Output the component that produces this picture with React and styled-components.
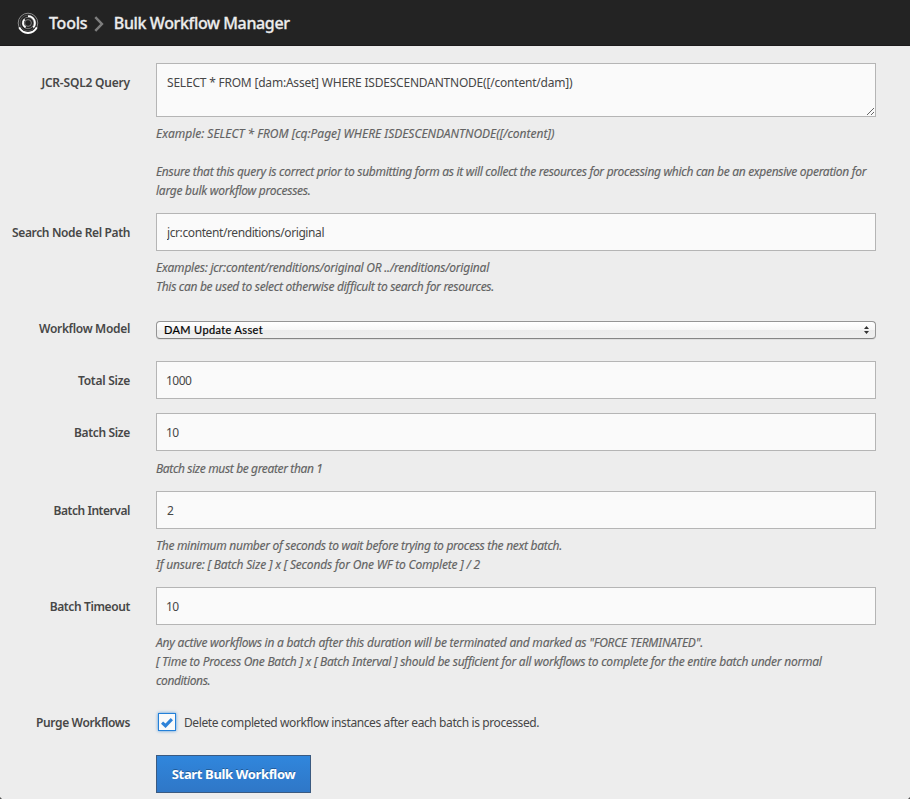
import React, { useState } from "react";
import styled, { createGlobalStyle } from "styled-components";

const GlobalStyle = createGlobalStyle`
  *, *::before, *::after { box-sizing: border-box; }
  body {
    margin: 0;
    background: #ededed;
    color: #474747;
    font: 12px/19px "Noto Sans", "Open Sans", sans-serif;
  }
  input, textarea, button { font: inherit; color: inherit; }
`;

const Page = styled.div`
  position: relative;
  height: 799px;
  overflow: hidden;
  background: #ededed;
`;

const Header = styled.header`
  display: flex;
  align-items: center;
  height: 46px;
  padding: 0 17px;
  background: #232323;
  border-bottom: 1px solid #1c1a1b;
`;

const Crumb = styled.span`
  color: #ececec;
  font-size: 16px;
  font-weight: 500;
  line-height: 24px;
  white-space: nowrap;
  letter-spacing: ${(p) => p.$ls}px;
  -webkit-text-stroke: 0.3px #ececec;
`;

const Logo = styled.svg`
  flex: none;
  width: 22px;
  height: 22px;
  margin-right: 10px;
`;

const Chevron = styled.svg`
  flex: none;
  width: 10px;
  height: 16px;
  margin: 2px 9.5px 0 7px;
`;

const Form = styled.form`
  display: flex;
  flex-direction: column;
  padding-top: 17px;
`;

const Row = styled.div`
  display: grid;
  grid-template-columns: 130px 720px;
  column-gap: 26px;
  align-items: start;
  height: ${(p) => p.$h}px;
`;

const Label = styled.label`
  padding-top: 10px;
  text-align: right;
  font-weight: 600;
  white-space: nowrap;
  letter-spacing: ${(p) => p.$ls}px;
`;

const Field = styled.div`
  display: flex;
  flex-direction: column;
`;

const TextInput = styled.input`
  display: block;
  width: 720px;
  height: 38px;
  padding: 0 10px 0 ${(p) => p.$pad || 10}px;
  border: 1px solid #b5b5b5;
  border-radius: 0;
  background: #fafafa;
  outline: none;
  letter-spacing: ${(p) => p.$ls}px;
`;

const QueryBox = styled.div`
  position: relative;
  height: 54px;
`;

const QueryInput = styled.textarea`
  display: block;
  width: 720px;
  height: 54px;
  padding: 9px 10px;
  border: 1px solid #b5b5b5;
  border-radius: 0;
  background: #fafafa;
  outline: none;
  overflow: hidden;
  resize: none;
  line-height: 19px;
  letter-spacing: -0.21px;
`;

const Grip = styled.svg`
  position: absolute;
  right: 2px;
  bottom: 2px;
  width: 7px;
  height: 7px;
`;

const Help = styled.div`
  padding-top: ${(p) => p.$top || 7}px;
  color: #636363;
  font-style: italic;
  -webkit-text-stroke: 0.15px #636363;
`;

const HelpLine = styled.div`
  min-height: 19px;
  white-space: nowrap;
  letter-spacing: ${(p) => p.$ls}px;
`;

const Select = styled.button`
  display: flex;
  align-items: center;
  justify-content: space-between;
  width: 720px;
  height: 18px;
  margin-top: 12px;
  padding: 0 6px 0 7px;
  border: 1px solid #949494;
  border-bottom-color: #858585;
  border-radius: 4px;
  background: linear-gradient(#ffffff 0%, #f6f6f6 49%, #ebebeb 50%, #efefef 100%);
  box-shadow: 0 1px 0 #dedede;
  color: #000;
  font-family: Lato, "Noto Sans", sans-serif;
  font-size: 11px;
  font-weight: 400;
  line-height: 16px;
  letter-spacing: 0.37px;
  -webkit-text-stroke: 0.2px #000;
`;

const Arrows = styled.svg`
  width: 5px;
  height: 8px;
`;

const CheckRow = styled.div`
  display: flex;
  align-items: center;
  height: 38px;
  padding-left: 2px;
`;

const CheckBox = styled.button`
  display: flex;
  align-items: center;
  justify-content: center;
  width: 18px;
  height: 18px;
  padding: 0;
  margin-right: 8px;
  border: 1px solid #2480d8;
  border-radius: 0;
  background: #fafafa;
  box-shadow: 0 0 3px rgba(36, 128, 216, 0.8);
`;

const CheckMark = styled.svg`
  flex: none;
  width: 12px;
  height: 10px;
  margin-top: 2px;
`;

const CheckText = styled.span`
  white-space: nowrap;
  letter-spacing: -0.392px;
`;

const Submit = styled.button`
  width: 155px;
  height: 38px;
  margin-left: 156px;
  padding: 0;
  border: 1px solid #3b5a80;
  border-radius: 0;
  background: linear-gradient(#3086dc, #2f77c7);
  color: #fff;
  font-size: 13px;
  font-weight: 700;
  letter-spacing: -0.35px;
  text-shadow: 0 -1px 0 rgba(0, 0, 0, 0.3);
`;

const Corner = styled.svg`
  position: absolute;
  bottom: 0;
  ${(p) => (p.$right ? "right: 0; transform: scaleX(-1);" : "left: 0;")}
  width: 2px;
  height: 2px;
`;

const fields = [
  {
    id: "relPath", label: "Search Node Rel Path", ls: -0.358, value: "jcr:content/renditions/original", valueLs: -0.4, h: 96,
    help: [
      ["Examples: jcr:content/renditions/original OR ../renditions/original", -0.226],
      ["This can be used to select otherwise difficult to search for resources.", -0.302],
    ],
  },
  { id: "model", label: "Workflow Model", ls: -0.32, value: "DAM Update Asset", select: true, h: 52 },
  { id: "total", label: "Total Size", ls: -0.262, value: "1000", valueLs: -0.5, pad: 9, h: 52 },
  {
    id: "batch", label: "Batch Size", ls: -0.342, value: "10", valueLs: -0.6, pad: 9, h: 78, top: 8,
    help: [["Batch size must be greater than 1", -0.365]],
  },
  {
    id: "interval", label: "Batch Interval", ls: -0.45, value: "2", valueLs: 0, h: 96,
    help: [
      ["The minimum number of seconds to wait before trying to process the next batch.", -0.289],
      ["If unsure: [ Batch Size ] x [ Seconds for One WF to Complete ] / 2", -0.182],
    ],
  },
  {
    id: "timeout", label: "Batch Timeout", ls: -0.38, value: "10", valueLs: -0.6, pad: 9, h: 116, top: 8,
    help: [
      ['Any active workflows in a batch after this duration will be terminated and marked as "FORCE TERMINATED".', -0.215],
      ["[ Time to Process One Batch ] x [ Batch Interval ] should be sufficient for all workflows to complete for the entire batch under normal", -0.249],
      ["conditions.", -0.37],
    ],
  },
];

const queryHelp = [
  ["Example: SELECT * FROM [cq:Page] WHERE ISDESCENDANTNODE([/content])", -0.015],
  ["", 0],
  ["Ensure that this query is correct prior to submitting form as it will collect the resources for processing which can be an expensive operation for", -0.3],
  ["large bulk workflow processes.", -0.26],
];

function HelpText({ lines, top }) {
  return (
    <Help $top={top}>
      {lines.map(([text, ls], i) => (
        <HelpLine key={i} $ls={ls}>{text}</HelpLine>
      ))}
    </Help>
  );
}

export default function App() {
  const [purge, setPurge] = useState(true);
  return (
    <Page>
      <GlobalStyle />
      <Header>
        <Logo viewBox="0 0 22 22" fill="none">
          <circle cx="11" cy="11" r="9.8" stroke="#8a8a8a" strokeWidth="1" />
          <circle cx="11" cy="11" r="7.9" stroke="#5a5a5a" strokeWidth="0.8" />
          <circle cx="11" cy="11" r="5.7" stroke="#777" strokeWidth="1" />
          <circle cx="11" cy="11" r="3.4" stroke="#8a8a8a" strokeWidth="0.9" />
          <path d="M2.2 15.4A9.8 9.8 0 0 0 19.8 15.4" stroke="#fff" strokeWidth="2" />
          <path d="M11 4.1A6.9 6.9 0 0 1 16.2 15.5" stroke="#fff" strokeWidth="1.8" />
          <path d="M8.6 15.4A5 5 0 0 1 7.6 7.3" stroke="#fff" strokeWidth="1.8" />
        </Logo>
        <Crumb $ls={-0.25}>Tools</Crumb>
        <Chevron viewBox="0 0 10 16" fill="none">
          <path d="M1.3 1.2L7.9 8L1.3 14.8" stroke="#7d7d7d" strokeWidth="2.5" />
        </Chevron>
        <Crumb $ls={-0.37}>Bulk Workflow Manager</Crumb>
      </Header>
      <Form onSubmit={(e) => e.preventDefault()}>
        <Row $h={150}>
          <Label $ls={-0.2} htmlFor="query">JCR-SQL2 Query</Label>
          <Field>
            <QueryBox>
              <QueryInput id="query" spellCheck={false} defaultValue="SELECT * FROM [dam:Asset] WHERE ISDESCENDANTNODE([/content/dam])" />
              <Grip viewBox="0 0 7 7" fill="none" stroke="#555" strokeWidth="0.9">
                <path d="M0 7L7 0M4 7L7 4" />
              </Grip>
            </QueryBox>
            <HelpText lines={queryHelp} />
          </Field>
        </Row>
        {fields.map((f) => (
          <Row key={f.id} $h={f.h}>
            <Label $ls={f.ls} htmlFor={f.id}>{f.label}</Label>
            <Field>
              {f.select ? (
                <Select type="button" id={f.id}>
                  {f.value}
                  <Arrows viewBox="0 0 5 8" fill="#333">
                    <path d="M2.5 0L5 3H0ZM2.5 8L5 5H0Z" />
                  </Arrows>
                </Select>
              ) : (
                <TextInput id={f.id} defaultValue={f.value} $ls={f.valueLs} $pad={f.pad} />
              )}
              {f.help && <HelpText lines={f.help} top={f.top} />}
            </Field>
          </Row>
        ))}
        <Row $h={52}>
          <Label $ls={-0.372}>Purge Workflows</Label>
          <CheckRow>
            <CheckBox type="button" role="checkbox" aria-checked={purge} aria-label="Purge Workflows" onClick={() => setPurge(!purge)}>
              {purge && (
                <CheckMark viewBox="0 0 12 10" fill="none">
                  <path d="M1 4.6L4.5 7.8L10.9 1.2" stroke="#2e82d8" strokeWidth="3.2" />
                </CheckMark>
              )}
            </CheckBox>
            <CheckText>Delete completed workflow instances after each batch is processed.</CheckText>
          </CheckRow>
        </Row>
        <Submit type="submit">Start Bulk Workflow</Submit>
      </Form>
      <Corner viewBox="0 0 2 2"><path d="M0 0L2 2H0Z" fill="#555" /></Corner>
      <Corner $right viewBox="0 0 2 2"><path d="M0 0L2 2H0Z" fill="#555" /></Corner>
    </Page>
  );
}
